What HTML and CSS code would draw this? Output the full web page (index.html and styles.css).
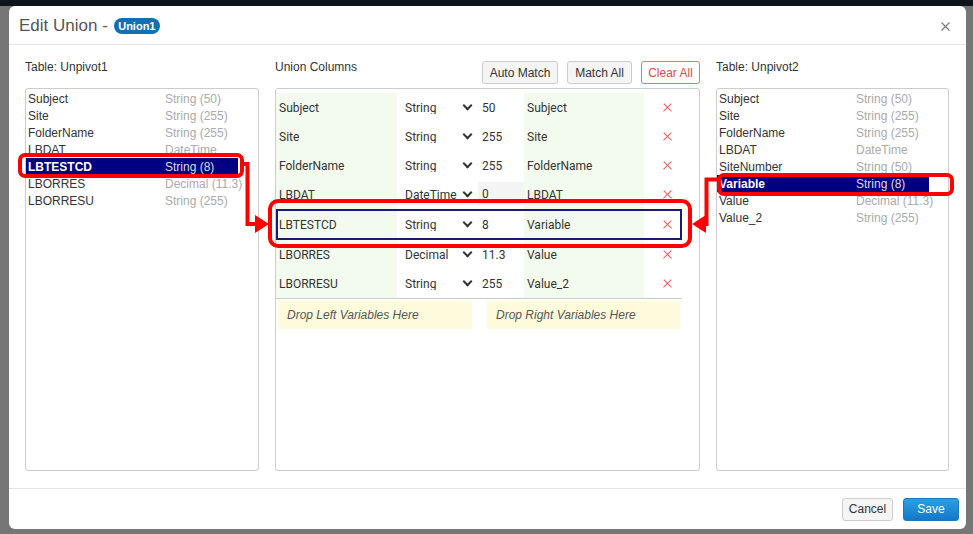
FILE: index.html
```html
<!DOCTYPE html>
<html lang="en">
<head>
    <meta charset="UTF-8">
    <title>Edit Union</title>
    <link rel="stylesheet" href="styles.css">
</head>
<body>
    <div class="modal">
        <div class="modal-header">
            <h4 class="title">Edit Union - <span class="badge">Union1</span></h4>
            <svg class="close" width="9" height="9" viewBox="0 0 9 9"><path d="M0.5 0.5L8.5 8.5M8.5 0.5L0.5 8.5" stroke="#777" stroke-width="1.1" fill="none"/></svg>
        </div>

        <div class="modal-body">
            <div class="col">
                <div class="col-head">Table: Unpivot1</div>
                <div class="box list">
                    <div class="item"><span class="name">Subject</span><span class="type">String (50)</span></div>
                    <div class="item"><span class="name">Site</span><span class="type">String (255)</span></div>
                    <div class="item"><span class="name">FolderName</span><span class="type">String (255)</span></div>
                    <div class="item"><span class="name">LBDAT</span><span class="type">DateTime</span></div>
                    <div class="item selected"><span class="name">LBTESTCD</span><span class="type">String (8)</span></div>
                    <div class="item"><span class="name">LBORRES</span><span class="type">Decimal (11.3)</span></div>
                    <div class="item"><span class="name">LBORRESU</span><span class="type">String (255)</span></div>
                </div>
            </div>

            <div class="col">
                <div class="col-head">
                    <span>Union Columns</span>
                    <div class="actions">
                        <button class="btn w-auto">Auto Match</button>
                        <button class="btn w-match">Match All</button>
                        <button class="btn btn-clear">Clear All</button>
                    </div>
                </div>
                <div class="box union">
                    <div class="urow"><div class="c-left">Subject</div><div class="c-type"><span class="sel">String</span><i class="chev"></i></div><div class="c-len">50</div><div class="c-right">Subject</div><div class="c-x"><i class="x"></i></div></div>
                    <div class="urow"><div class="c-left">Site</div><div class="c-type"><span class="sel">String</span><i class="chev"></i></div><div class="c-len">255</div><div class="c-right">Site</div><div class="c-x"><i class="x"></i></div></div>
                    <div class="urow"><div class="c-left">FolderName</div><div class="c-type"><span class="sel">String</span><i class="chev"></i></div><div class="c-len">255</div><div class="c-right">FolderName</div><div class="c-x"><i class="x"></i></div></div>
                    <div class="urow"><div class="c-left">LBDAT</div><div class="c-type"><span class="sel">DateTime</span><i class="chev"></i></div><div class="c-len disabled">0</div><div class="c-right">LBDAT</div><div class="c-x"><i class="x"></i></div></div>
                    <div class="urow active"><div class="c-left">LBTESTCD</div><div class="c-type"><span class="sel">String</span><i class="chev"></i></div><div class="c-len">8</div><div class="c-right">Variable</div><div class="c-x"><i class="x"></i></div></div>
                    <div class="urow"><div class="c-left">LBORRES</div><div class="c-type"><span class="sel">Decimal</span><i class="chev"></i></div><div class="c-len">11.3</div><div class="c-right">Value</div><div class="c-x"><i class="x"></i></div></div>
                    <div class="urow"><div class="c-left">LBORRESU</div><div class="c-type"><span class="sel">String</span><i class="chev"></i></div><div class="c-len">255</div><div class="c-right">Value_2</div><div class="c-x"><i class="x"></i></div></div>
                    <div class="drops">
                        <div class="drop">Drop Left Variables Here</div>
                        <div class="drop">Drop Right Variables Here</div>
                    </div>
                </div>
            </div>

            <div class="col">
                <div class="col-head">Table: Unpivot2</div>
                <div class="box list">
                    <div class="item"><span class="name">Subject</span><span class="type">String (50)</span></div>
                    <div class="item"><span class="name">Site</span><span class="type">String (255)</span></div>
                    <div class="item"><span class="name">FolderName</span><span class="type">String (255)</span></div>
                    <div class="item"><span class="name">LBDAT</span><span class="type">DateTime</span></div>
                    <div class="item"><span class="name">SiteNumber</span><span class="type">String (50)</span></div>
                    <div class="item selected"><span class="name">Variable</span><span class="type">String (8)</span></div>
                    <div class="item"><span class="name">Value</span><span class="type">Decimal (11.3)</span></div>
                    <div class="item"><span class="name">Value_2</span><span class="type">String (255)</span></div>
                </div>
            </div>
        </div>

        <div class="modal-footer">
            <button class="btn w-cancel">Cancel</button>
            <button class="btn btn-save">Save</button>
        </div>
    </div>

    <!-- red callouts drawn over the dialog -->
    <svg class="callouts" width="973" height="534" viewBox="0 0 973 534">
        <g fill="none" stroke="#f00" stroke-width="4">
            <rect x="20" y="155" width="222" height="21" rx="5"/>
            <rect x="270" y="201" width="420" height="45" rx="8"/>
            <rect x="719" y="175" width="233" height="19" rx="5"/>
            <path d="M242 164H247.5V224H257"/>
            <path d="M719 179.5H706.5V224H705"/>
        </g>
        <g fill="#f00">
            <polygon points="255,215 269,224 255,233"/>
            <polygon points="706,215 692,224 706,233"/>
        </g>
    </svg>
</body>
</html>
```

FILE: styles.css
```css
body {
    margin: 0;
    height: 534px;
    overflow: hidden;
    position: relative;
    background: linear-gradient(#0d141c 0 6px, #767676 6px);
    font-family: "Liberation Sans", Arial, sans-serif;
    color: #333;
}
.modal {
    margin: 6px 0 0 9px;
    width: 957px;
    height: 523px;
    background: #fff;
    border-radius: 6px;
    display: flex;
    flex-direction: column;
}
.modal-header {
    height: 39px;
    box-sizing: border-box;
    border-bottom: 1px solid #e5e5e5;
    display: flex;
    align-items: center;
    justify-content: space-between;
    padding: 1px 16px 0 10px;
}
.title {
    margin: 0;
    font-size: 17px;
    font-weight: normal;
    color: #555;
    display: flex;
    align-items: center;
}
.badge {
    margin-left: 6px;
    width: 46px;
    height: 16px;
    border-radius: 8px;
    background: #136fb4;
    color: #fff;
    font-size: 11px;
    font-weight: bold;
    line-height: 16px;
    text-align: center;
}
.close {
    display: block;
    margin-top: 2px;
}
.modal-body {
    height: 443px;
    box-sizing: border-box;
    display: grid;
    grid-template-columns: 234px 425px 233px;
    column-gap: 16px;
    padding: 0 16px;
}
.col-head {
    height: 43px;
    box-sizing: border-box;
    padding-top: 15px;
    display: flex;
    justify-content: space-between;
    align-items: flex-start;
    font-size: 12px;
    line-height: 14px;
    color: #333;
}
.box {
    height: 383px;
    box-sizing: border-box;
    border: 1px solid #ccc;
    border-radius: 3px;
}
.list {
    padding-top: 1px;
}
.item {
    display: flex;
    width: 212px;
    height: 17px;
    line-height: 18px;
    font-size: 12px;
    white-space: nowrap;
}
.item .name {
    flex: 0 0 137px;
    padding-left: 2px;
    color: #333;
}
.item .type {
    flex-shrink: 0;
    color: #aaa;
}
.item.selected {
    background: #000080;
}
.item.selected .name {
    color: #fff;
    font-weight: bold;
}
.item.selected .type {
    color: #ddd;
}
.actions {
    display: flex;
    gap: 9px;
    margin-top: 1px;
}
.btn {
    height: 23px;
    padding: 0;
    font-family: "Liberation Sans", Arial, sans-serif;
    font-size: 12px;
    color: #333;
    background: #f5f5f5;
    border: 1px solid #ccc;
    border-radius: 3px;
}
.w-auto { width: 76px; }
.w-match { width: 65px; }
.btn-clear {
    width: 59px;
    color: #e04a4a;
    background: #fff;
    border-color: #e57373;
}
.union {
    padding-top: 4px;
}
.urow {
    display: grid;
    grid-template-columns: 121px 81px 46px 120px 38px;
    width: 406px;
    height: 29px;
    font-family: Roboto, "Liberation Sans", sans-serif;
    font-size: 12px;
    color: #333;
}
.urow > div {
    display: flex;
    align-items: center;
    white-space: nowrap;
    overflow: hidden;
}
.urow.active {
    height: 31px;
    outline: 2px solid #1b1b70;
    outline-offset: -2px;
}
.c-left {
    background: #f3fbef;
    padding-left: 3px;
}
.c-right {
    background: #f3fbef;
    padding-left: 3px;
}
.urow.active .c-left {
    margin-left: 2px;
    padding-left: 1px;
}
.c-type {
    padding-left: 8px;
}
.sel {
    display: block;
    width: 58px;
    height: 13px;
    line-height: 14px;
    margin-top: -1px;
    overflow: hidden;
}
.chev {
    width: 5px;
    height: 5px;
    margin: -4px 0 0 1px;
    border-right: 2px solid #333;
    border-bottom: 2px solid #333;
    transform: rotate(45deg);
}
.c-len {
    padding-left: 4px;
}
.c-len.disabled {
    background: #f4f4f4;
    margin: 2px 0 4px;
}
.c-x {
    padding-left: 19px;
}
.x {
    position: relative;
    width: 9px;
    height: 9px;
}
.x::before, .x::after {
    content: "";
    position: absolute;
    left: -1px;
    top: 4px;
    width: 11px;
    height: 1.4px;
    background: #ef5b5b;
    transform: rotate(45deg);
}
.x::after {
    transform: rotate(-45deg);
}
.drops {
    width: 406px;
    border-top: 1px solid #ccc;
    display: flex;
    gap: 15px;
    padding: 2px 2px 0;
    box-sizing: border-box;
}
.drop {
    flex: 1;
    height: 28px;
    line-height: 28px;
    padding-left: 9px;
    background: #fdfbdc;
    font-size: 12px;
    font-style: italic;
    color: #555;
}
.drop:first-child {
    flex: 0 0 194px;
    box-sizing: border-box;
}
.modal-footer {
    height: 41px;
    box-sizing: border-box;
    border-top: 1px solid #e5e5e5;
    display: flex;
    align-items: center;
    justify-content: flex-end;
    gap: 10px;
    padding-right: 7px;
}
.w-cancel { width: 51px; }
.btn-save {
    width: 56px;
    color: #fff;
    border-color: #1a78c2;
    background: linear-gradient(#2aa0e4, #1478c8);
}
.callouts {
    position: absolute;
    top: 0;
    left: 0;
    pointer-events: none;
}
```
